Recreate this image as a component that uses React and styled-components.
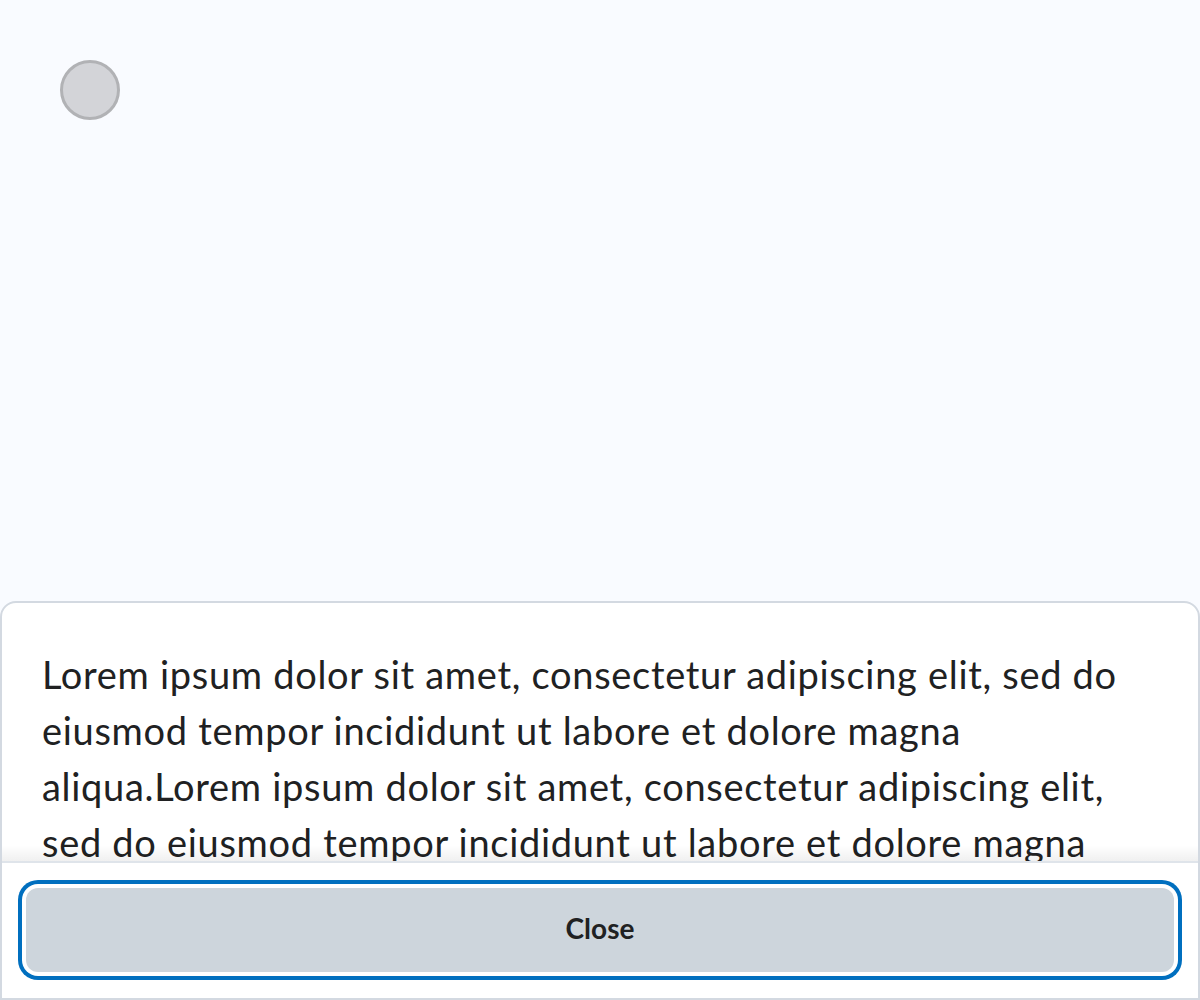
import React from 'react';
import styled, { createGlobalStyle } from 'styled-components';

const GlobalStyle = createGlobalStyle`
    html, body {
        margin: 0;
        padding: 0;
        background: #f9fbff;
        font-family: Lato, 'Noto Sans', sans-serif;
    }
`

const Page = styled.div`
    height: 100vh;
    display: flex;
    flex-direction: column;
    overflow: hidden;
`

const Top = styled.div`
    flex: 1;
    padding: 60px;
`

const Dot = styled.div`
    width: 54px;
    height: 54px;
    border-radius: 50%;
    background: #d3d4d8;
    border: 3px solid #b1b2b5;
`

const Dialog = styled.div`
    height: 399px;
    box-sizing: border-box;
    background: #ffffff;
    border: 2px solid #d3d9e1;
    border-radius: 16px 16px 0 0;
    display: flex;
    flex-direction: column;
    overflow: hidden;
`

const Content = styled.div`
    flex: 1;
    overflow: hidden;
    padding: 43px 40px 0 40px;
`

const Text = styled.p`
    margin: 0;
    color: #202122;
    font-size: 38px;
    line-height: 56px;
    letter-spacing: 0.7px;
`

const Footer = styled.div`
    position: relative;
    border-top: 2px solid #dfe4ea;
    padding: 25px 24px 26px 24px;
    background: #ffffff;

    &::before {
        content: '';
        position: absolute;
        left: 0;
        right: 0;
        top: -18px;
        height: 16px;
        background: linear-gradient(to bottom, rgba(0,0,0,0), rgba(0,0,0,0.06));
    }
`

const Button = styled.button`
    display: block;
    width: 100%;
    height: 84px;
    border: none;
    border-radius: 12px;
    background: #cdd5dc;
    color: #202122;
    font-family: Lato, 'Noto Sans', sans-serif;
    font-size: 28px;
    font-weight: 700;
    padding: 0 0 4px 0;
    box-shadow: 0 0 0 4px #ffffff, 0 0 0 8px #006fbf;
    cursor: pointer;
`

const App = () => {
    return (
        <Page>
            <GlobalStyle />
            <Top>
                <Dot />
            </Top>
            <Dialog>
                <Content>
                    <Text>
                        Lorem ipsum dolor sit amet, consectetur adipiscing elit, sed do eiusmod tempor incididunt ut labore et dolore magna aliqua.Lorem ipsum dolor sit amet, consectetur adipiscing elit, sed do eiusmod tempor incididunt ut labore et dolore magna aliqua.
                    </Text>
                </Content>
                <Footer>
                    <Button>Close</Button>
                </Footer>
            </Dialog>
        </Page>
    )
}

export default App
